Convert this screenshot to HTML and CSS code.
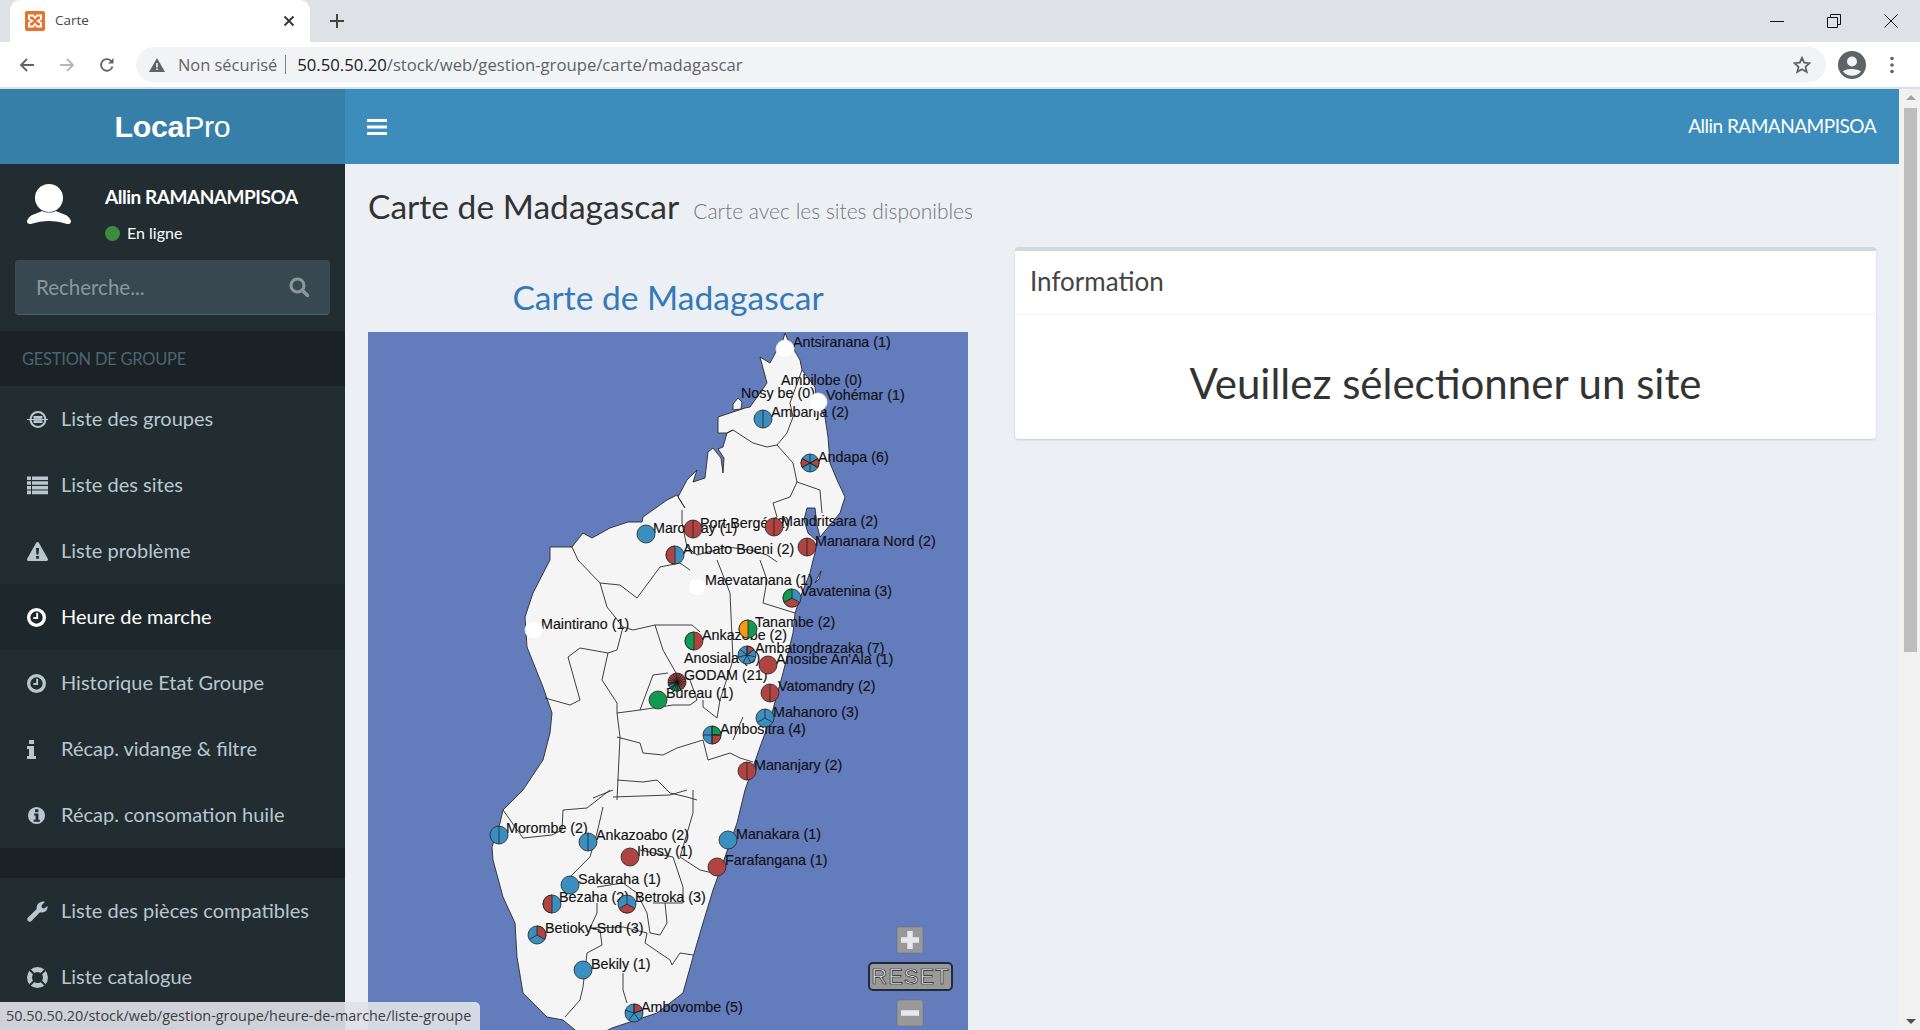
FILE: index.html
```html
<!DOCTYPE html>
<html lang="fr">
<head>
<meta charset="utf-8">
<title>Carte</title>
<link rel="stylesheet" href="styles.css">
</head>
<body>
<svg class="defs" width="0" height="0" aria-hidden="true">
  <defs>
    <symbol id="i-clock" viewBox="0 0 20 20"><path fill-rule="evenodd" d="M10 0a10 10 0 1 0 0 20a10 10 0 0 0 0-20zm0 3.500a6.500 6.500 0 1 1 0 13a6.500 6.500 0 0 1 0-13z"/><path d="M9.700 5h2v6.500h-5v-2h3z"/></symbol>
  </defs>
</svg>
<header class="chrome">
  <div class="tabstrip">
    <div class="tab">
      <svg class="favicon" viewBox="0 0 20 20"><rect width="20" height="20" rx="2" fill="#e8742c"/><path d="M4 4.500h4l2 2.500l2-2.500h4v3.500l-3 2l3 2v3.500h-4l-2-2.500l-2 2.500h-4v-3.500l3-2l-3-2z" fill="none" stroke="#fff" stroke-width="2"/></svg>
      <span class="tab-title">Carte</span>
      <svg class="tab-close" viewBox="0 0 12 12"><path d="M1.500 1.500l9 9m0-9l-9 9" stroke="#333" stroke-width="1.800"/></svg>
    </div>
    <svg class="new-tab" viewBox="0 0 14 14"><path d="M7 0v14M0 7h14" stroke="#444" stroke-width="2"/></svg>
    <div class="win-controls">
      <svg viewBox="0 0 14 14"><path d="M0 7.500h14" stroke="#111" stroke-width="1"/></svg>
      <svg viewBox="0 0 14 14"><path d="M.5 3.500h10v10h-10zM3.500 3.500v-3h10v10h-3" fill="none" stroke="#111" stroke-width="1"/></svg>
      <svg viewBox="0 0 14 14"><path d="M.5.500l13 13m0-13l-13 13" stroke="#111" stroke-width="1"/></svg>
    </div>
  </div>
  <div class="toolbar">
    <svg class="nav-ico" viewBox="0 0 16 16"><path d="M15 8H2M8 2L2 8l6 6" fill="none" stroke="#5f6368" stroke-width="1.800"/></svg>
    <svg class="nav-ico" viewBox="0 0 16 16"><path d="M1 8h13M8 2l6 6l-6 6" fill="none" stroke="#b4b7bb" stroke-width="1.800"/></svg>
    <svg class="nav-ico" viewBox="0 0 16 16"><path d="M13.500 9.500A5.800 5.800 0 1 1 12 3.800" fill="none" stroke="#5f6368" stroke-width="1.800"/><path d="M14.500 1v5.500H9z" fill="#5f6368"/></svg>
    <div class="omnibox">
      <svg class="warn" viewBox="0 0 16 14"><path d="M8 0l8 14H0z" fill="#5f6368"/><path d="M7.200 5h1.600v4.500H7.200zm0 5.500h1.600V12H7.200z" fill="#f1f3f4"/></svg>
      <span class="insecure">Non sécurisé</span>
      <span class="omni-sep"></span>
      <span class="url"><span class="url-host">50.50.50.20</span>/stock/web/gestion-groupe/carte/madagascar</span>
      <svg class="star" viewBox="0 0 18 18"><path d="M9 1.800l2.200 4.900 5.300.5-4 3.500 1.200 5.200L9 13.200l-4.700 2.700 1.200-5.200-4-3.500 5.300-.5z" fill="none" stroke="#5f6368" stroke-width="1.800"/></svg>
    </div>
    <svg class="avatar" viewBox="0 0 28 28"><circle cx="14" cy="14" r="14" fill="#5f6368"/><circle cx="14" cy="10.500" r="5" fill="#f1f3f4"/><path d="M5 20.500c2-3.500 15-3.500 18 0a11.500 11.500 0 0 1-18 0z" fill="#f1f3f4"/></svg>
    <svg class="dots" viewBox="0 0 4 18"><circle cx="2" cy="2.500" r="1.800" fill="#5f6368"/><circle cx="2" cy="9" r="1.800" fill="#5f6368"/><circle cx="2" cy="15.500" r="1.800" fill="#5f6368"/></svg>
  </div>
</header>

<div class="viewport">
  <div class="page">
    <div class="topbar">
      <div class="logo"><b>Loca</b>Pro</div>
      <div class="navbar">
        <svg class="burger" viewBox="0 0 20 16"><path d="M0 1.500h20M0 8h20M0 14.500h20" stroke="#fff" stroke-width="3"/></svg>
        <span class="nav-user">Allin RAMANAMPISOA</span>
      </div>
    </div>
    <div class="body-row">
      <aside class="sidebar">
        <div class="user-panel">
          <svg class="user-pic" viewBox="0 0 46 40"><circle cx="23" cy="14" r="14" fill="#fff"/><path d="M1 37c2-7 10-7 15-10c4 2 10 2 14 0c5 3 13 3 15 10c0 3-2 3-4 3c-12-4-24-4-36 0c-2 0-4 0-4-3z" fill="#fff"/></svg>
          <div class="user-info">
            <div class="user-name">Allin RAMANAMPISOA</div>
            <div class="user-status"><span class="online-dot"></span>En ligne</div>
          </div>
        </div>
        <div class="search">
          <span class="search-ph">Recherche...</span>
          <svg class="search-ico" viewBox="0 0 20 20"><circle cx="8.500" cy="8.500" r="6.500" fill="none" stroke="#8b979d" stroke-width="3"/><path d="M13 13l5.500 5.500" stroke="#8b979d" stroke-width="3.500" stroke-linecap="round"/></svg>
        </div>
        <div class="menu-header">GESTION DE GROUPE</div>
        <nav class="menu">
          <a class="menu-item">
            <svg class="m-ico" viewBox="0 0 24 20"><circle cx="12.500" cy="10" r="8.500" fill="none" stroke="currentColor" stroke-width="2.400"/><path d="M8 6.500h9v2H8zM8 11.500h9v2H8zM0 10h24" stroke="currentColor" stroke-width="1.200" fill="currentColor"/></svg>
            <span>Liste des groupes</span>
          </a>
          <a class="menu-item">
            <svg class="m-ico" viewBox="0 0 21 18"><path d="M0 0h4v3.600H0zM5 0h16v3.600H5zM0 4.700h4v3.600H0zM5 4.700h16v3.600H5zM0 9.400h4V13H0zM5 9.400h16V13H5zM0 14.100h4v3.600H0zM5 14.100h16v3.600H5z" fill="currentColor"/></svg>
            <span>Liste des sites</span>
          </a>
          <a class="menu-item">
            <svg class="m-ico" viewBox="0 0 21 19"><path fill-rule="evenodd" d="M10.500 0c.7 0 1.200.4 1.500 1l8.800 15.800c.5 1-.2 2.200-1.300 2.200H1.500C.4 19-.3 17.800.2 16.800L9 1c.3-.6.800-1 1.500-1zM9 6l.4 6.500h2.200L12 6zm.1 8v2.800h2.800V14z" fill="currentColor"/></svg>
            <span>Liste problème</span>
          </a>
          <a class="menu-item active">
            <svg class="m-ico m-ico-clock"><use href="#i-clock"/></svg>
            <span>Heure de marche</span>
          </a>
          <a class="menu-item">
            <svg class="m-ico m-ico-clock"><use href="#i-clock"/></svg>
            <span>Historique Etat Groupe</span>
          </a>
          <a class="menu-item">
            <svg class="m-ico m-ico-i" viewBox="0 0 9 19"><path d="M2 0h5v4H2zM0 6h7v10h2v3H0v-3h2v-7H0z" fill="currentColor"/></svg>
            <span>Récap. vidange &amp; filtre</span>
          </a>
          <a class="menu-item">
            <svg class="m-ico m-ico-clock" viewBox="0 0 20 20"><path fill-rule="evenodd" d="M10 1a9 9 0 1 0 0 18a9 9 0 0 0 0-18zM8.500 3.500h3.500v3H8.500zM7.500 8h4.500v6.500h1.500v2h-6.500v-2H9V10H7.500z" fill="currentColor"/></svg>
            <span>Récap. consomation huile</span>
          </a>
          <div class="menu-gap"></div>
          <a class="menu-item">
            <svg class="m-ico" viewBox="0 0 21 21"><path d="M20.500 5c.5 3-1.500 6.500-6 6.500c-.6 0-1 0-1.500-.2L4.500 20c-1 1-2.500 1-3.500 0c-1-1-1-2.500 0-3.500l8.700-8.500c-.6-3.700 2-7.500 6.800-7.500c.6 0 1 .1 1.400.3L14.500 4.500l.5 2.500 2.300.5z" fill="currentColor"/></svg>
            <span>Liste des pièces compatibles</span>
          </a>
          <a class="menu-item">
            <svg class="m-ico" viewBox="0 0 21 21"><circle cx="10.500" cy="10.500" r="8" fill="none" stroke="currentColor" stroke-width="5"/><path d="M3 3l4.500 4.500M18 3l-4.500 4.500M3 18l4.500-4.500M18 18l-4.500-4.500" stroke="#222d32" stroke-width="2"/></svg>
            <span>Liste catalogue</span>
          </a>
        </nav>
      </aside>
      <main class="content">
        <div class="page-title">
          <h1>Carte de Madagascar</h1>
          <small>Carte avec les sites disponibles</small>
        </div>
        <div class="columns">
          <section class="map-col">
            <h2 class="map-title">Carte de Madagascar</h2>
            <svg class="map" viewBox="368 332 600 698">
              <path class="land" d="M785 333L788 340L793 348L800 360L802 370L815 387L817 403L825 417L828 437L830 463L837 480L845 497L840 513L820 537L817 525L815 508L807 508L804 520L808 533L817 541L815 553L813 560L810 573L802 593L795 613L793 633L783 673L770 720L760 747L745 790L737 823L725 857L713 890L703 923L693 957L683 993L657 1013L612 1028L600 1034L580 1034L563 1020L547 1017L523 993L517 957L515 923L503 897L493 860L492 847L500 823L503 810L523 790L543 760L550 733L552 713L543 687L527 647L525 617L533 593L550 560L550 547L572 547L583 533L592 538L610 528L628 522L642 522L643 517L667 500L677 495L685 508L678 497L687 480L697 470L693 482L705 478L708 452L713 448L721 458L723 473L724 458L718 449L723 447L727 433L733 430L727 433L718 433L718 417L730 413L745 408L750 407L767 383L760 357L770 363L777 350L783 340Z"/>
              <path class="land" d="M733 404L738 398L742 402L741 409L733 410Z"/>
              <path class="land" d="M815 583L821 571L819 579Z"/>
              <g class="borders">
                <path d="M802 370L790 403L793 417L787 433L777 445"/>
                <path d="M777 445L767 447L753 443L733 430"/>
                <path d="M777 445L793 463L797 482L820 490L822 513"/>
                <path d="M797 482L790 497L773 503L777 517"/>
                <path d="M682 510L682 523L687 547L697 555L727 547L750 550L767 555L777 562"/>
                <path d="M572 547L578 560L600 583L620 585L637 598L660 567L680 563L690 570"/>
                <path d="M600 583L607 607L623 627L633 630L655 625L677 625L692 625L700 632"/>
                <path d="M623 627L617 650L608 653L580 648L568 657L580 700L570 705L545 698"/>
                <path d="M608 653L602 680L617 703L617 713L640 710L653 675L668 673"/>
                <path d="M640 710L673 705L690 705L697 700L690 680"/>
                <path d="M617 713L620 737L617 800"/>
                <path d="M655 625L663 650L680 680"/>
                <path d="M617 737L640 743L643 753L663 755L677 748L703 740"/>
                <path d="M703 740L708 760L730 753L740 758L753 762"/>
                <path d="M703 700L703 707L717 718L720 700L733 660L730 593L717 560"/>
                <path d="M760 560L767 580L763 603L795 613"/>
                <path d="M743 717L733 740"/>
                <path d="M617 780L643 782L657 780L670 793L687 797L697 800"/>
                <path d="M593 798L613 790"/>
                <path d="M503 810L523 838L552 835L562 830L563 810L587 808L610 790"/>
                <path d="M603 807L597 833L590 857L570 877"/>
                <path d="M613 797L670 795L687 790"/>
                <path d="M693 790L693 813L680 857L700 870L713 873"/>
                <path d="M640 850L673 857L683 887L683 903L653 903"/>
                <path d="M597 887L623 883L637 893L647 913L650 933L660 935L667 923L665 903"/>
                <path d="M597 903L597 913L590 928L600 930L602 945L587 953L583 987L580 1000L565 1017"/>
                <path d="M590 928L623 927L647 933L645 943L670 960L672 965L680 953L693 955"/>
                <path d="M623 973L623 990L627 1003"/>
              </g>
              <g class="labels">
                <text x="793" y="347">Antsiranana (1)</text>
                <text x="781" y="385">Ambilobe (0)</text>
                <text x="741" y="398">Nosy be (0)</text>
                <text x="826" y="400">Vohémar (1)</text>
                <text x="771" y="417">Ambanja (2)</text>
                <text x="818" y="462">Andapa (6)</text>
                <text x="653" y="533">Marovoay (1)</text>
                <text x="700" y="528">Port Bergé (2)</text>
                <text x="781" y="526">Mandritsara (2)</text>
                <text x="815" y="546">Mananara Nord (2)</text>
                <text x="683" y="554">Ambato Boeni (2)</text>
                <text x="705" y="585">Maevatanana (1)</text>
                <text x="800" y="596">Vavatenina (3)</text>
                <text x="541" y="629">Maintirano (1)</text>
                <text x="755" y="627">Tanambe (2)</text>
                <text x="702" y="640">Ankazobe (2)</text>
                <text x="755" y="653">Ambatondrazaka (7)</text>
                <text x="684" y="663">Anosiala (5)</text>
                <text x="776" y="664">Anosibe An'Ala (1)</text>
                <text x="684" y="680">GODAM (21)</text>
                <text x="666" y="698">Bureau (1)</text>
                <text x="778" y="691">Vatomandry (2)</text>
                <text x="773" y="717">Mahanoro (3)</text>
                <text x="720" y="734">Ambositra (4)</text>
                <text x="754" y="770">Mananjary (2)</text>
                <text x="506" y="833">Morombe (2)</text>
                <text x="596" y="840">Ankazoabo (2)</text>
                <text x="637" y="856">Ihosy (1)</text>
                <text x="736" y="839">Manakara (1)</text>
                <text x="725" y="865">Farafangana (1)</text>
                <text x="578" y="884">Sakaraha (1)</text>
                <text x="559" y="902">Bezaha (2)</text>
                <text x="635" y="902">Betroka (3)</text>
                <text x="545" y="933">Betioky-Sud (3)</text>
                <text x="591" y="969">Bekily (1)</text>
                <text x="641" y="1012">Ambovombe (5)</text>
              </g>
              <g class="pies">
                <circle class="w" cx="785" cy="349" r="9"/>
                <circle class="w" cx="818" cy="402" r="9"/>
                <g transform="translate(763 419)"><circle class="b" r="9"/><path d="M0-9V9"/></g>
                <g transform="translate(810 463)"><circle class="b" r="9"/><path class="r" d="M0 0L7.800-4.500A9 9 0 0 1 7.800 4.500Z"/><path class="r" d="M0 0L-7.800 4.500A9 9 0 0 1-7.800-4.500Z"/><path d="M0-9V9M-7.800-4.500L7.800 4.500M-7.800 4.500L7.800-4.500"/></g>
                <circle class="b" cx="646" cy="534" r="9"/>
                <g transform="translate(693 529)"><circle class="r" r="9"/><path d="M0-9V9"/></g>
                <g transform="translate(774 527)"><circle class="r" r="9"/><path d="M0-9V9"/></g>
                <g transform="translate(807 547)"><circle class="r" r="9"/><path d="M0-9V9"/></g>
                <g transform="translate(675 555)"><circle class="b" r="9"/><path class="r" d="M0-9A9 9 0 0 0 0 9Z"/></g>
                <circle class="w" cx="697" cy="587" r="9"/>
                <g transform="translate(792 598)"><circle class="b" r="9"/><path class="g" d="M0 0L-7.800 4.500A9 9 0 0 1 0-9Z"/><path class="r" d="M0 0L7.800 4.500A9 9 0 0 1-7.800 4.500Z"/></g>
                <circle class="w" cx="534" cy="630" r="9"/>
                <g transform="translate(748 629)"><circle class="g" r="9"/><path class="o" d="M0-9A9 9 0 0 0 0 9Z"/></g>
                <g transform="translate(694 641)"><circle class="r" r="9"/><path class="g" d="M0-9A9 9 0 0 0 0 9Z"/></g>
                <g transform="translate(747 655)"><circle class="b" r="9"/><path class="r" d="M0 0V-9A9 9 0 0 1 7.040-5.610Z"/><path d="M0 0V-9M0 0L7.040-5.610M0 0L8.770 2M0 0L3.900 8.110M0 0L-3.900 8.110M0 0L-8.770 2M0 0L-7.040-5.610"/></g>
                <circle class="r" cx="768" cy="665" r="9"/>
                <g transform="translate(677 682)"><circle class="r" r="9"/><path class="g" d="M0 0L3.900 8.110A9 9 0 0 1-6.120 6.600Z"/><path class="b" d="M0 0L-6.120 6.600A9 9 0 0 1-8.770 2Z"/><path class="thin" d="M0-9V9M2.650-8.600L-2.650 8.600M5.070-7.440L-5.070 7.440M7.040-5.610L-7.040 5.610M8.380-3.290L-8.380 3.290M8.970-.670L-8.970.670M8.770 2L-8.770-2M7.790 4.500L-7.790-4.500M6.120 6.600L-6.120-6.600M3.900 8.110L-3.900-8.110M1.340 8.900L-1.340-8.900"/></g>
                <circle class="g" cx="658" cy="700" r="9"/>
                <g transform="translate(770 693)"><circle class="r" r="9"/><path d="M0-9V9"/></g>
                <g transform="translate(765 718)"><circle class="b" r="9"/><path d="M0 0V-9M0 0L7.800 4.500M0 0L-7.800 4.500"/></g>
                <g transform="translate(712 735)"><circle class="b" r="9"/><path class="g" d="M0 0V-9A9 9 0 0 1 9 0Z"/><path class="r" d="M0 0H9A9 9 0 0 1 0 9Z"/><path d="M0-9V9M-9 0H9"/></g>
                <g transform="translate(747 771)"><circle class="r" r="9"/><path d="M0-9V9"/></g>
                <g transform="translate(499 835)"><circle class="b" r="9"/><path d="M0-9V9"/></g>
                <g transform="translate(588 842)"><circle class="b" r="9"/><path d="M0-9V9"/></g>
                <circle class="r" cx="630" cy="857" r="9"/>
                <circle class="b" cx="728" cy="840" r="9"/>
                <circle class="r" cx="717" cy="867" r="9"/>
                <circle class="b" cx="570" cy="885" r="9"/>
                <g transform="translate(552 904)"><circle class="b" r="9"/><path class="r" d="M0-9A9 9 0 0 0 0 9Z"/></g>
                <g transform="translate(627 904)"><circle class="b" r="9"/><path class="r" d="M0 0L7.800 4.500A9 9 0 0 1-7.800 4.500Z"/><path d="M0 0V-9"/></g>
                <g transform="translate(537 935)"><circle class="b" r="9"/><path class="r" d="M0 0V-9A9 9 0 0 1 7.800 4.500Z"/><path d="M0 0L-7.800 4.500"/></g>
                <circle class="b" cx="583" cy="970" r="9"/>
                <g transform="translate(634 1013)"><circle class="b" r="9"/><path class="r" d="M0 0V-9A9 9 0 0 1 8.560-2.780Z"/><path d="M0 0V-9M0 0L8.560-2.780M0 0L5.290 7.280M0 0L-5.290 7.280M0 0L-8.560-2.780"/></g>
              </g>
              <g class="zoom-ctrl">
                <rect class="zbtn" x="897" y="927" width="26" height="26" rx="2"/>
                <path class="zsign" d="M901 940h18M910 931v18"/>
                <rect class="zreset" x="869" y="963" width="83" height="27" rx="4"/>
                <text class="zreset-text" x="910.500" y="984">RESET</text>
                <rect class="zbtn" x="897" y="1000" width="26" height="26" rx="2"/>
                <path class="zsign" d="M901 1013h18"/>
              </g>
            </svg>
          </section>
          <section class="box">
            <div class="box-header">Information</div>
            <div class="box-body">Veuillez sélectionner un site</div>
          </section>
        </div>
      </main>
    </div>
  </div>
  <div class="scrollbar">
    <span class="sb-up"></span>
    <span class="sb-thumb"></span>
    <span class="sb-down"></span>
  </div>
</div>
<div class="status-bubble">50.50.50.20/stock/web/gestion-groupe/heure-de-marche/liste-groupe</div>
</body>
</html>
```
FILE: styles.css
```css
* { box-sizing: border-box; }
html, body { margin: 0; height: 100%; }
body {
  display: flex;
  flex-direction: column;
  height: 100vh;
  overflow: hidden;
  position: relative;
  font-family: "Lato", "Liberation Sans", sans-serif;
  background: #ecf0f5;
}
.defs { position: absolute; }

/* browser chrome */
.chrome { flex: none; font-family: "Open Sans", "Liberation Sans", sans-serif; }
.tabstrip { height: 42px; background: #dee1e6; display: flex; align-items: center; padding-left: 10px; }
.tab {
  width: 300px; height: 42px; background: #fff;
  border-radius: 10px 10px 0 0;
  display: flex; align-items: center; padding: 0 15px;
}
.favicon { width: 20px; height: 20px; flex: none; }
.tab-title { margin-left: 10px; font-size: 13.5px; color: #45484b; flex: 1; padding-bottom: 2px; }
.tab-close { width: 12px; height: 12px; }
.new-tab { width: 14px; height: 14px; margin-left: 20px; }
.win-controls { margin-left: auto; display: flex; gap: 43px; padding-right: 22px; }
.win-controls svg { width: 14px; height: 14px; display: block; }
.toolbar {
  height: 47px; background: #fff; border-bottom: 2px solid #d8e1e8;
  display: flex; align-items: center; padding: 0 0 0 19px;
}
.nav-ico { width: 16px; height: 16px; margin-right: 24px; flex: none; }
.omnibox {
  margin-left: -3px; width: 1690px; height: 35px; background: #f1f3f4;
  border-radius: 18px; display: flex; align-items: center; padding-left: 13px;
}
.warn { width: 16px; height: 14px; flex: none; }
.insecure { margin-left: 13px; font-size: 16.4px; color: #5f6368; }
.omni-sep { width: 1px; height: 19px; background: #7b7f83; margin: 0 11px 0 8px; }
.url { font-size: 16.7px; color: #5f6368; }
.url-host { color: #202124; }
.star { width: 18px; height: 18px; margin-left: auto; margin-right: 15px; }
.avatar { width: 28px; height: 28px; margin-left: 12px; flex: none; }
.dots { width: 4px; height: 18px; margin-left: 24px; flex: none; }

/* page */
.viewport { flex: 1; min-height: 0; display: flex; }
.page { flex: 1; min-width: 0; display: flex; flex-direction: column; }
.scrollbar {
  flex: none; width: 21px; background: #f1f1f1;
  display: flex; flex-direction: column; align-items: center;
  padding: 6px 3px 6px 5px;
}
.sb-up, .sb-down { width: 0; height: 0; border-left: 5px solid transparent; border-right: 5px solid transparent; flex: none; }
.sb-up { border-bottom: 5px solid #a3a3a3; }
.sb-down { border-top: 5px solid #505050; margin-top: auto; }
.sb-thumb { width: 100%; height: 544px; background: #bdbdbd; margin-top: 8px; flex: none; }

.topbar { height: 75px; flex: none; display: flex; background: #3c8dbc; }
.logo {
  width: 345px; flex: none; background: #367fa9; color: #fff;
  display: flex; align-items: center; justify-content: center;
  font-family: "Liberation Sans", sans-serif; font-size: 30.3px; letter-spacing: -.3px;
}
.logo b { font-weight: 700; }
.navbar { flex: 1; display: flex; align-items: center; justify-content: space-between; padding: 0 23px 0 22px; }
.burger { width: 20px; height: 16px; }
.nav-user { color: #fff; font-size: 19px; letter-spacing: -.5px; padding-bottom: 2px; }

.body-row { flex: 1; min-height: 0; display: flex; }
.sidebar { width: 345px; flex: none; background: #222d32; overflow: hidden; }
.user-panel { height: 96px; display: flex; padding: 20px 0 0 26px; }
.user-pic { width: 46px; height: 40px; flex: none; }
.user-info { margin-left: 33px; margin-top: 1px; }
.user-name { color: #fff; font-size: 19px; font-weight: 700; line-height: 24px; letter-spacing: -.47px; }
.user-status { color: #fff; font-size: 16px; display: flex; align-items: center; margin-top: 14px; line-height: 20px; }
.online-dot { width: 15px; height: 15px; border-radius: 50%; background: #3d8b3d; margin-right: 7px; }
.search {
  height: 55px; margin: 0 15px 16px; background: #374850;
  border: 1px solid #3a4a52; border-bottom-color: #48606b; border-radius: 4px;
  display: flex; align-items: center; justify-content: space-between;
  padding: 0 20px 2px 20px;
}
.search-ph { color: #8b979d; font-size: 20.5px; }
.search-ico { width: 20px; height: 20px; }
.menu-header {
  height: 55px; background: #1a2226; color: #4b646f; font-size: 16.5px; letter-spacing: -.25px;
  display: flex; align-items: center; padding-left: 22px;
}
.menu-item {
  height: 66px; display: flex; align-items: center;
  padding-left: 27px; color: #b8c7ce; font-size: 20px;
}
.menu-item span { margin-left: 13px; padding-bottom: 2px; }
.menu-item.active { background: #1e282c; color: #fff; }
.m-ico { width: 21px; height: 21px; flex: none; }
.m-ico-clock { fill: currentColor; width: 19px; height: 19px; margin-right: 2px; }
.m-ico-i { width: 9px; height: 19px; margin-right: 12px; }
.menu-gap { height: 30px; background: #1a2226; }

.content { flex: 1; min-width: 0; padding: 0 23px; overflow: hidden; }
.page-title { display: flex; align-items: baseline; height: 83px; padding-top: 19px; }
.page-title h1 { margin: 0; font-size: 33.6px; font-weight: 400; color: #333; line-height: 46px; }
.page-title small { margin-left: 14px; font-size: 21px; color: #777; font-weight: 300; }
.columns { display: grid; grid-template-columns: 600px 1fr; column-gap: 47px; align-items: start; }
.map-title { margin: 0; height: 85px; padding-top: 27px; text-align: center; font-size: 33.6px; font-weight: 400; color: #337ab7; line-height: 46px; }
.map { display: block; width: 600px; height: 698px; background: #627cbc; }
.land { fill: #f5f5f5; stroke: #2a2a2a; stroke-width: .9; }
.borders path { fill: none; stroke: #2a2a2a; stroke-width: .9; }
.labels text { font-family: "Liberation Sans", sans-serif; font-size: 14.3px; fill: #111; stroke: #111; stroke-width: .15; }
.pies circle, .pies path { stroke: #222; stroke-width: .8; }
.pies path { fill: none; }
.pies circle.b, .pies path.b { fill: #3b8fc0; }
.pies circle.r, .pies path.r { fill: #b04440; }
.pies circle.g, .pies path.g { fill: #119a51; }
.pies circle.o, .pies path.o { fill: #f39c12; }
.pies circle.w { fill: #fff; stroke: #eee; }
.pies path.thin { stroke: #111; stroke-width: .7; }
.zbtn { fill: #999; stroke: #6c6c6c; stroke-width: .5; }
.zsign { stroke: #e6e8ee; stroke-width: 5.5; fill: none; }
.zreset { fill: #999; stroke: #1f2a3a; stroke-width: 2; }
.zreset-text {
  font-family: "Liberation Sans", sans-serif; font-size: 22px; letter-spacing: 1px;
  text-anchor: middle; fill: #eee; stroke: #222; stroke-width: .7;
}
.box {
  background: #fff; border-top: 4px solid #d2d6de;
  border-radius: 4px; box-shadow: 0 1px 2px rgba(0,0,0,.15);
}
.box-header {
  height: 64px; border-bottom: 1px solid #f4f4f4; display: flex; align-items: center;
  padding: 0 0 3px 15px; font-size: 26px; color: #444;
}
.box-body { height: 124px; display: flex; align-items: center; justify-content: center; font-size: 42px; color: #333; padding-top: 12px; }

.status-bubble {
  position: absolute; left: 0; bottom: 0; width: 480px; height: 28px;
  background: rgba(222,225,230,.92); border-top-right-radius: 5px;
  font-family: "Open Sans", "Liberation Sans", sans-serif;
  font-size: 14.4px; color: #3c4043; line-height: 28px; padding-left: 6px; white-space: nowrap;
}
```
